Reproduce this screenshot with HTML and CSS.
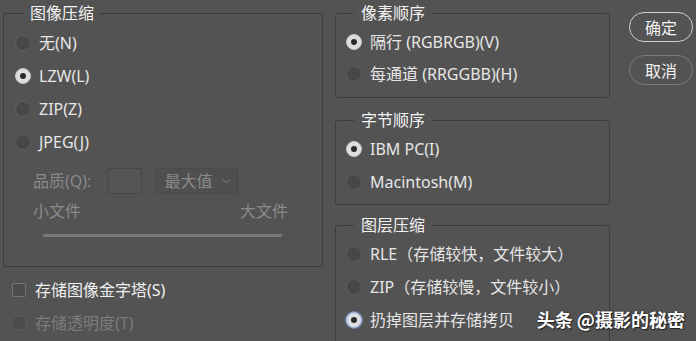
FILE: index.html
```html
<!DOCTYPE html>
<html lang="zh-CN">
<head>
    <meta charset="UTF-8">
    <title>TIFF 选项</title>
    <link rel="stylesheet" href="styles.css">
</head>
<body>
    <div class="dialog">
        <div class="col-left">
            <fieldset class="group group-image">
                <legend>图像压缩</legend>
                <div class="radio-list">
                    <div class="radio-row"><span class="radio"></span>无(N)</div>
                    <div class="radio-row"><span class="radio checked"></span>LZW(L)</div>
                    <div class="radio-row"><span class="radio"></span>ZIP(Z)</div>
                    <div class="radio-row"><span class="radio"></span>JPEG(J)</div>
                </div>
                <div class="quality-row">
                    <span class="dim">品质(Q):</span>
                    <span class="num-box"></span>
                    <span class="select">最大值
                        <svg class="chev" width="9" height="6" viewBox="0 0 9 6"><path d="M1 1.5 L4.5 4.5 L8 1.5" fill="none" stroke="#707070" stroke-width="1.2"/></svg>
                    </span>
                </div>
                <div class="size-row">
                    <span>小文件</span>
                    <span>大文件</span>
                </div>
                <div class="slider"></div>
            </fieldset>
            <div class="check-row"><span class="checkbox"></span>存储图像金字塔(S)</div>
            <div class="check-row disabled"><span class="checkbox"></span>存储透明度(T)</div>
        </div>

        <div class="col-mid">
            <fieldset class="group group-pixel">
                <legend>像素顺序</legend>
                <div class="radio-list">
                    <div class="radio-row tight"><span class="radio checked"></span>隔行 (RGBRGB)(V)</div>
                    <div class="radio-row tight"><span class="radio"></span>每通道 (RRGGBB)(H)</div>
                </div>
            </fieldset>
            <fieldset class="group group-byte">
                <legend>字节顺序</legend>
                <div class="radio-list">
                    <div class="radio-row"><span class="radio checked"></span>IBM PC(I)</div>
                    <div class="radio-row"><span class="radio"></span>Macintosh(M)</div>
                </div>
            </fieldset>
            <fieldset class="group group-layer">
                <legend>图层压缩</legend>
                <div class="radio-list">
                    <div class="radio-row"><span class="radio"></span>RLE（存储较快，文件较大）</div>
                    <div class="radio-row"><span class="radio"></span>ZIP（存储较慢，文件较小）</div>
                    <div class="radio-row"><span class="radio checked focus"></span>扔掉图层并存储拷贝</div>
                </div>
            </fieldset>
        </div>

        <div class="col-btn">
            <button class="btn primary">确定</button>
            <button class="btn">取消</button>
        </div>
    </div>

    <div class="watermark">头条 @摄影的秘密</div>
</body>
</html>
```

FILE: styles.css
```css
* {
    margin: 0;
    padding: 0;
    box-sizing: border-box;
}

html, body {
    width: 696px;
    height: 341px;
    overflow: hidden;
}

body {
    background: #535353;
    color: #e8e8e8;
    font-family: 'Noto Sans', 'Noto Sans CJK SC', sans-serif;
    font-size: 16px;
    line-height: 20px;
    position: relative;
}

.dialog {
    display: flex;
    padding: 3px 0 0 3px;
}

.col-left {
    width: 320px;
}

.col-mid {
    width: 275px;
    margin-left: 12px;
}

.col-btn {
    display: flex;
    flex-direction: column;
    gap: 13px;
    margin-left: 19px;
    margin-top: 9px;
}

/* group boxes */
.group {
    border: 1px solid #3d3d3d;
    border-radius: 3px;
    padding: 0;
    min-width: 0;
}

.group legend {
    margin-left: 20px;
    padding: 0 6px;
    font-size: 16px;
    line-height: 20px;
    color: #f2f2f2;
}

.group-image {
    height: 264px;
}

.group-pixel {
    height: 95px;
}

.group-byte {
    height: 95px;
    margin-top: 12px;
}

.group-layer {
    height: 140px;
    margin-top: 10px;
}

.col-mid .group legend {
    margin-left: 18px;
    padding: 0 7px;
}

.radio-list {
    padding-top: 3px;
}

.group-byte .radio-list,
.group-layer .radio-list {
    padding-top: 2px;
}

.radio-row {
    display: flex;
    align-items: center;
    height: 33px;
    padding-left: 11px;
    color: #e6e6e6;
    white-space: nowrap;
}

.radio-row.tight {
    height: 32px;
}

.col-mid .radio-row {
    padding-left: 10px;
}

.radio {
    width: 16px;
    height: 16px;
    border-radius: 50%;
    background: #474747;
    border: 1px solid #5e5e5e;
    margin-right: 8px;
    flex-shrink: 0;
    position: relative;
}

.radio.checked {
    background: #dedede;
    border-color: #c8c8c8;
}

.radio.checked::after {
    content: '';
    position: absolute;
    left: 4px;
    top: 4px;
    width: 6px;
    height: 6px;
    border-radius: 50%;
    background: #2b2b2b;
}

.radio.focus {
    border-color: #9fb4d8;
    box-shadow: 0 0 0 1px #6f84a8;
}

/* quality controls */
.dim {
    color: #8a8a8a;
}

.quality-row {
    display: flex;
    align-items: center;
    height: 26px;
    margin-top: 10px;
    padding-left: 29px;
}

.num-box {
    width: 34px;
    height: 26px;
    margin-left: 17px;
    border: 1px solid #474747;
    background: #555555;
}

.select {
    display: flex;
    align-items: center;
    justify-content: space-between;
    width: 83px;
    height: 26px;
    margin-left: 13px;
    padding: 0 6px 0 8px;
    background: #4f4f4f;
    border: 1px solid #4a4a4a;
    color: #8a8a8a;
}

.size-row {
    display: flex;
    justify-content: space-between;
    width: 255px;
    height: 22px;
    line-height: 22px;
    margin: 6px 0 0 29px;
    color: #8a8a8a;
}

.slider {
    width: 239px;
    height: 3px;
    margin: 12px 0 0 39px;
    background: #7a7a7a;
    border-radius: 1px;
}

/* checkboxes */
.check-row {
    display: flex;
    align-items: center;
    height: 33px;
    padding-left: 9px;
    color: #f0f0f0;
}

.check-row:first-of-type {
    margin-top: 6px;
}

.checkbox {
    width: 14px;
    height: 14px;
    border: 1px solid #757575;
    border-radius: 2px;
    background: #4c4c4c;
    margin-right: 9px;
}

.check-row.disabled {
    color: #7c7c7c;
}

.check-row.disabled .checkbox {
    border-color: #595959;
}

/* buttons */
.btn {
    width: 64px;
    height: 30px;
    border-radius: 15px;
    border: 1.5px solid #7a7a7a;
    background: #535353;
    color: #f2f2f2;
    font-family: 'Noto Sans CJK SC', sans-serif;
    font-size: 16px;
    line-height: 20px;
}

.btn.primary {
    border-color: #cfcfcf;
}

.watermark {
    position: absolute;
    right: 11px;
    top: 307px;
    font-family: 'Noto Sans CJK SC', sans-serif;
    font-size: 18px;
    font-weight: bold;
    line-height: 24px;
    color: #ffffff;
    text-shadow: 0 0 2px #222, 1px 1px 1px #222;
}
```
